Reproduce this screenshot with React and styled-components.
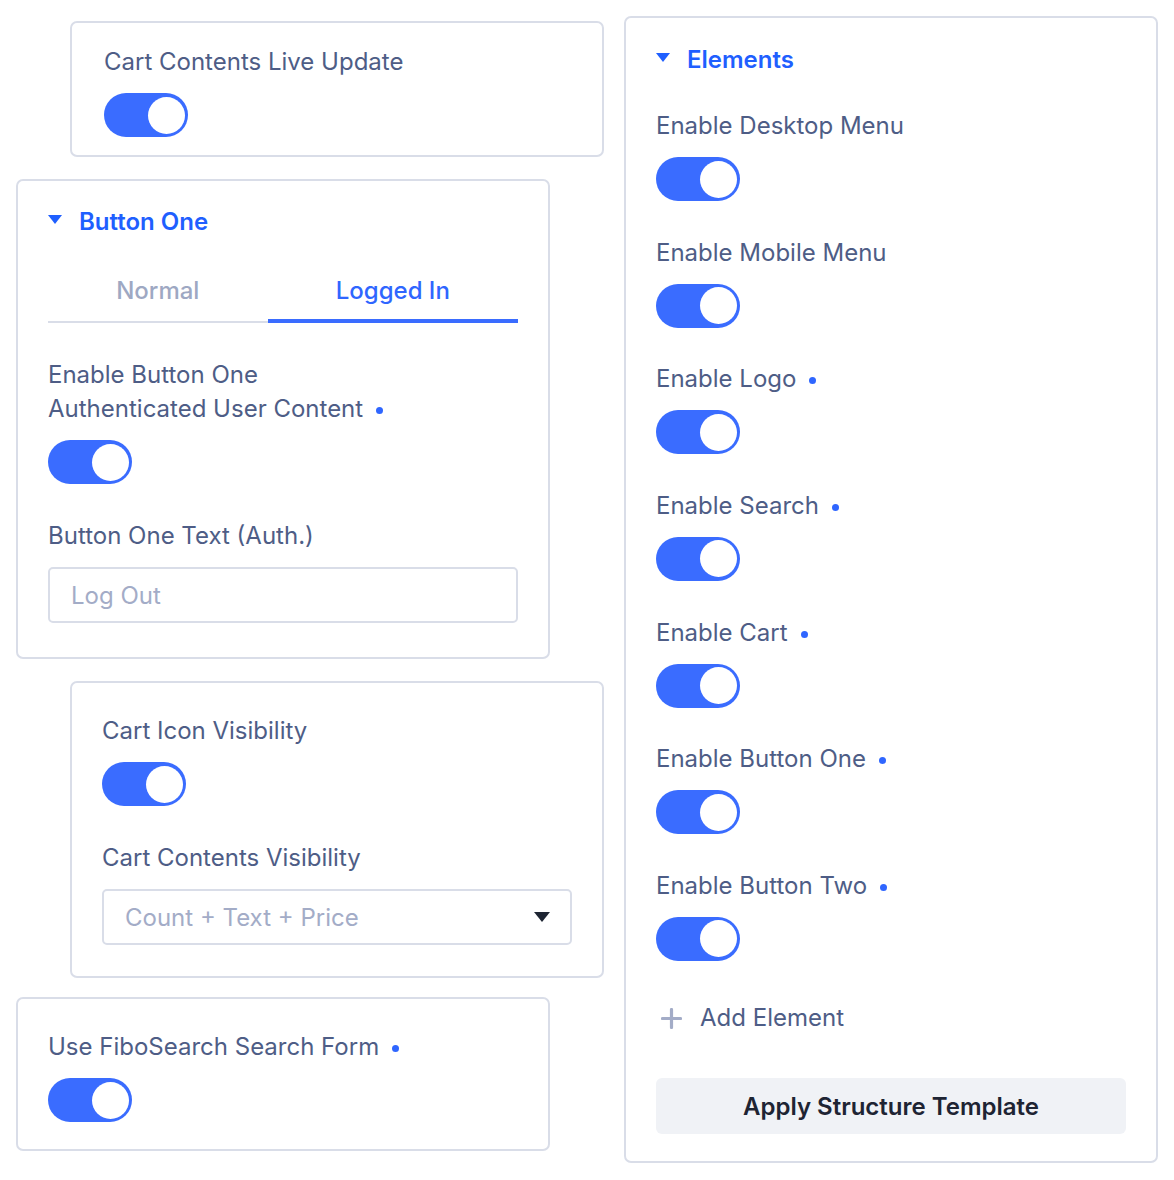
import React from 'react';
import styled, { createGlobalStyle } from 'styled-components';

const GlobalStyle = createGlobalStyle`
  * { box-sizing: border-box; }
  body {
    margin: 0;
    background: #ffffff;
    font-family: Inter, "Noto Sans", "Liberation Sans", sans-serif;
    -webkit-font-smoothing: antialiased;
  }
`;

const Page = styled.div`
  display: flex;
  align-items: flex-start;
  gap: 21px;
  padding: 16px;
  width: 1174px;
`;

const LeftColumn = styled.div`
  display: flex;
  flex-direction: column;
  width: 587px;
`;

const Card = styled.section`
  width: 534px;
  margin-left: ${props => (props.$indent ? '54px' : '0')};
  margin-top: ${props => props.$top || '0'};
  padding: ${props => props.$pad || '22px 32px 18px'};
  border: 2px solid #d9dde8;
  border-radius: 7px;
  background: #fff;
`;

const Panel = styled.section`
  width: 534px;
  padding: 24px 30px 27px;
  border: 2px solid #d9dde8;
  border-radius: 7px;
  background: #fff;
`;

const SectionHeader = styled.div`
  display: flex;
  align-items: center;
  gap: 17px;
  height: 34px;
  color: #1f5fff;
  font-size: 24px;
  font-weight: 600;
`;

const Caret = styled.span`
  width: 0;
  height: 0;
  border-left: 7.5px solid transparent;
  border-right: 7.5px solid transparent;
  border-top: 9px solid ${props => props.$color || '#1f5fff'};
  margin-top: -4px;
`;

const Tabs = styled.div`
  display: flex;
  margin-top: 24px;
`;

const Tab = styled.div`
  flex: 1 1 auto;
  text-align: center;
  padding-top: 12px;
  padding-bottom: ${props => (props.$active ? '11px' : '13px')};
  line-height: 34px;
  font-size: 24px;
  font-weight: 500;
  color: ${props => (props.$active ? '#2f66ff' : '#9ea8c3')};
  border-bottom: ${props => (props.$active ? '4px solid #3a6cff' : '2px solid #d9dde8')};
`;

const Field = styled.div`
  display: flex;
  flex-direction: column;
  align-items: flex-start;
  gap: 14px;
  margin-top: ${props => props.$top || '0'};
`;

const Label = styled.div`
  font-size: 24px;
  line-height: 34px;
  color: #4e5d86;
`;

const Dot = styled.span`
  display: inline-block;
  width: 7px;
  height: 7px;
  border-radius: 50%;
  background: #2f66ff;
  margin-left: 13px;
  vertical-align: 3px;
`;

const Toggle = styled.div`
  position: relative;
  width: 84px;
  height: 44px;
  border-radius: 22px;
  background: #3a6cff;
  flex-shrink: 0;

  &::after {
    content: '';
    position: absolute;
    top: 3.5px;
    right: 3.5px;
    width: 37px;
    height: 37px;
    border-radius: 50%;
    background: #fff;
  }
`;

const Input = styled.div`
  width: 100%;
  height: 56px;
  display: flex;
  align-items: center;
  justify-content: space-between;
  padding: 0 20px 0 21px;
  border: 2px solid #d9dde8;
  border-radius: 5px;
  font-size: 24px;
  color: #a3acc7;
`;

const Arrow = styled.span`
  width: 0;
  height: 0;
  border-left: 8px solid transparent;
  border-right: 8px solid transparent;
  border-top: 10px solid #1e2533;
`;

const AddRow = styled.div`
  display: flex;
  align-items: center;
  gap: 18px;
  margin-top: 40.5px;
  padding-left: 5px;
  font-size: 24px;
  line-height: 34px;
  color: #4e5d86;
`;

const ApplyButton = styled.button`
  display: block;
  width: 100%;
  height: 56px;
  margin-top: 43px;
  border: none;
  border-radius: 6px;
  background: #f0f2f6;
  color: #1e2433;
  font-family: inherit;
  font-size: 24px;
  font-weight: 600;
`;

const PlusIcon = () => (
  <svg width="21" height="21" viewBox="0 0 21 21">
    <path d="M10.5 1.5v18M1.5 10.5h18" stroke="#a3acc7" strokeWidth="3.2" strokeLinecap="round" />
  </svg>
);

const elements = [
  { label: 'Enable Desktop Menu' },
  { label: 'Enable Mobile Menu' },
  { label: 'Enable Logo', dot: true },
  { label: 'Enable Search', dot: true },
  { label: 'Enable Cart', dot: true },
  { label: 'Enable Button One', dot: true },
  { label: 'Enable Button Two', dot: true },
];

const App = () => (
  <>
    <GlobalStyle />
    <Page>
      <LeftColumn>
        <Card $indent $top="5px" $pad="22px 32px 18px">
          <Field>
            <Label>Cart Contents Live Update</Label>
            <Toggle />
          </Field>
        </Card>

        <Card $top="22px" $pad="23px 30px 34px">
          <SectionHeader>
            <Caret />
            Button One
          </SectionHeader>
          <Tabs>
            <Tab>Normal</Tab>
            <Tab $active>Logged In</Tab>
          </Tabs>
          <Field $top="35px">
            <Label>
              Enable Button One
              <br />
              Authenticated User Content<Dot />
            </Label>
            <Toggle />
          </Field>
          <Field $top="35px">
            <Label>Button One Text (Auth.)</Label>
            <Input>Log Out</Input>
          </Field>
        </Card>

        <Card $indent $top="22px" $pad="31px 30px 31px">
          <Field>
            <Label>Cart Icon Visibility</Label>
            <Toggle />
          </Field>
          <Field $top="35px">
            <Label>Cart Contents Visibility</Label>
            <Input>
              Count + Text + Price
              <Arrow />
            </Input>
          </Field>
        </Card>

        <Card $top="19px" $pad="31px 30px 27px">
          <Field>
            <Label>
              Use FiboSearch Search Form<Dot />
            </Label>
            <Toggle />
          </Field>
        </Card>
      </LeftColumn>

      <Panel>
        <SectionHeader>
          <Caret />
          Elements
        </SectionHeader>
        {elements.map((item, i) => (
          <Field key={item.label} $top={i === 0 ? '33px' : '34.67px'}>
            <Label>
              {item.label}
              {item.dot && <Dot />}
            </Label>
            <Toggle />
          </Field>
        ))}
        <AddRow>
          <PlusIcon />
          Add Element
        </AddRow>
        <ApplyButton>Apply Structure Template</ApplyButton>
      </Panel>
    </Page>
  </>
);

export default App;
